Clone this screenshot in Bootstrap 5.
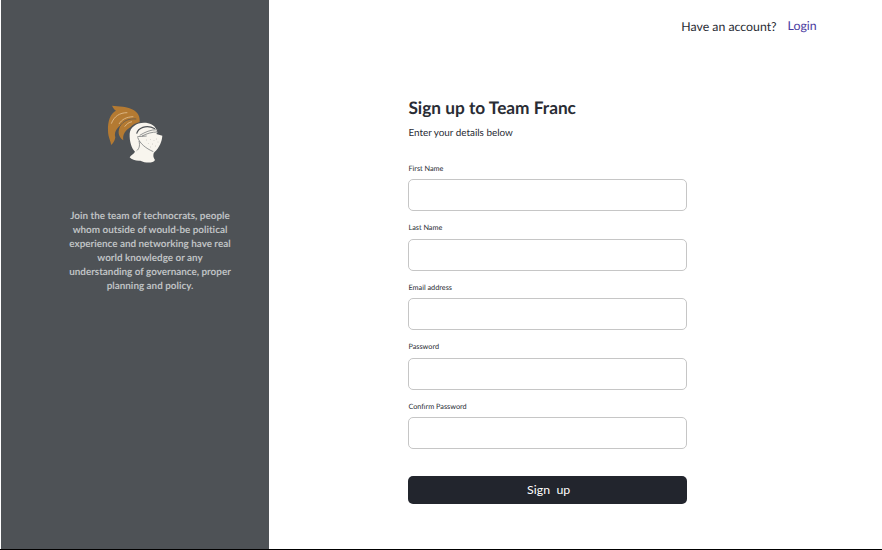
<!DOCTYPE html>
<html lang="en">
<head>
<meta charset="utf-8">
<meta name="viewport" content="width=device-width, initial-scale=1">
<title>Sign up - Team Franc</title>
<link href="https://cdn.jsdelivr.net/npm/bootstrap@5.3.0/dist/css/bootstrap.min.css" rel="stylesheet">
<style>
  body { font-family: Lato, sans-serif; color: #292c34; background: #fff; text-rendering: geometricPrecision; }
  .page { height: 550px; border-bottom: 1px solid #000; padding-left: 1px; }
  .side { width: 268px; background: #4e5256; padding: 96px 0 0 30px; }
  .logo { width: 70px; height: 74px; margin-left: -30px; }
  .pitch { width: 180px; margin-top: 39px; font-size: 9.9px; line-height: 14.1px; font-weight: 700; color: #bfc1c3; font-variant-ligatures: none; }
  .account { font-size: 12.3px; line-height: 16px; padding: 19px 65.4px 0 0; gap: 11px; }
  .account a { color: #4a3aa0; margin-top: -1px; }
  .signup { width: 278.5px; margin: 62px 0 0 139.4px; }
  .signup h1 { font-size: 17.25px; line-height: 22px; }
  .intro { font-size: 9.9px; line-height: 14px; margin: 7px 0 23.5px; }
  .form-label { font-size: 7.3px; line-height: 10px; height: 10px; margin-bottom: 5.5px; }
  .form-control { height: 32px; border-color: #c6c6c6; border-radius: 5px; }
  .field { height: 59.6px; }
  .btn-signup { height: 28px; margin-top: 15px; padding: 0 0 0 2px; font-size: 12.3px; line-height: 26px; color: #fff; background: #22252d; border-radius: 5px; word-spacing: 3px; letter-spacing: .1px; }
</style>
</head>
<body>
<div class="page d-flex">
  <aside class="side d-flex flex-column align-items-center flex-shrink-0">
    <svg class="logo" viewBox="0 0 210 222" aria-hidden="true">
      <path fill="#b47a32" d="M36 29C55 31 83 31 102 43C116 52 120 65 119 78C107 81 98 86 91 94C76 103 67 116 70 133C54 123 52 106 62 88C48 98 42 112 46 124C44 136 39 143 33 147C34 138 24 124 24 105C23 75 31 53 48 44C43 41 40 36 36 29Z"/>
      <path fill="none" stroke="#e2c093" stroke-width="2.5" d="M34 83C42 61 59 50 82 50M57 84C66 70 78 63 100 62M74 92C80 84 86 79 96 77"/>
      <path fill="none" stroke="#4e5256" stroke-width="2" d="M60 90C70 74 87 67 109 69"/>
      <path fill="#f8f5ee" d="M89 113C90 94 109 80 132 80C149 80 164 87 169 100L172 101L169 106L173 108L169 114L187 119C186 135 179 154 163 169L161 172C159 179 160 186 165 192C160 202 137 202 121 194C108 195 95 191 89 184C93 176 102 174 105 167C95 157 88 137 89 113Z"/>
      <g fill="none" stroke="#4e5256">
        <path stroke-width="3.5" d="M110 113C114 97 137 84 165 98"/>
        <path stroke-width="1.8" d="M119 118C136 108 151 101 171 101M126 120C142 112 156 108 172 108M112 122L140 120M113 124C119 142 137 157 160 167M117 135C121 151 116 160 110 164"/>
      </g>
      <g fill="#aaa9a5">
        <circle cx="139" cy="132" r="1.2"/><circle cx="151" cy="130" r="1.2"/><circle cx="162" cy="134" r="1.2"/>
        <circle cx="145" cy="142" r="1.2"/><circle cx="157" cy="144" r="1.2"/><circle cx="169" cy="129" r="1.2"/>
        <circle cx="152" cy="153" r="1.2"/><circle cx="166" cy="150" r="1.2"/><circle cx="174" cy="138" r="1.2"/>
      </g>
    </svg>
    <p class="pitch text-center mb-0">Join the team of technocrats, people<br>whom outside of would-be political<br>experience and networking have real<br>world knowledge or any<br>understanding of governance, proper<br>planning and policy.</p>
  </aside>
  <main class="flex-grow-1">
    <div class="account d-flex justify-content-end">
      <span>Have an account?</span>
      <a href="#" class="text-decoration-none">Login</a>
    </div>
    <form class="signup">
      <h1 class="fw-bold mb-0">Sign up to Team Franc</h1>
      <p class="intro">Enter your details below</p>
      <div class="field"><label class="form-label d-block" for="first">First Name</label><input class="form-control" id="first" type="text"></div>
      <div class="field"><label class="form-label d-block" for="last">Last Name</label><input class="form-control" id="last" type="text"></div>
      <div class="field"><label class="form-label d-block" for="email">Email address</label><input class="form-control" id="email" type="email"></div>
      <div class="field"><label class="form-label d-block" for="password">Password</label><input class="form-control" id="password" type="password"></div>
      <div class="field"><label class="form-label d-block" for="confirm">Confirm Password</label><input class="form-control" id="confirm" type="password"></div>
      <button class="btn btn-signup w-100 d-block" type="button">Sign up</button>
    </form>
  </main>
</div>
<script src="https://cdn.jsdelivr.net/npm/bootstrap@5.3.0/dist/js/bootstrap.bundle.min.js"></script>
</body>
</html>
